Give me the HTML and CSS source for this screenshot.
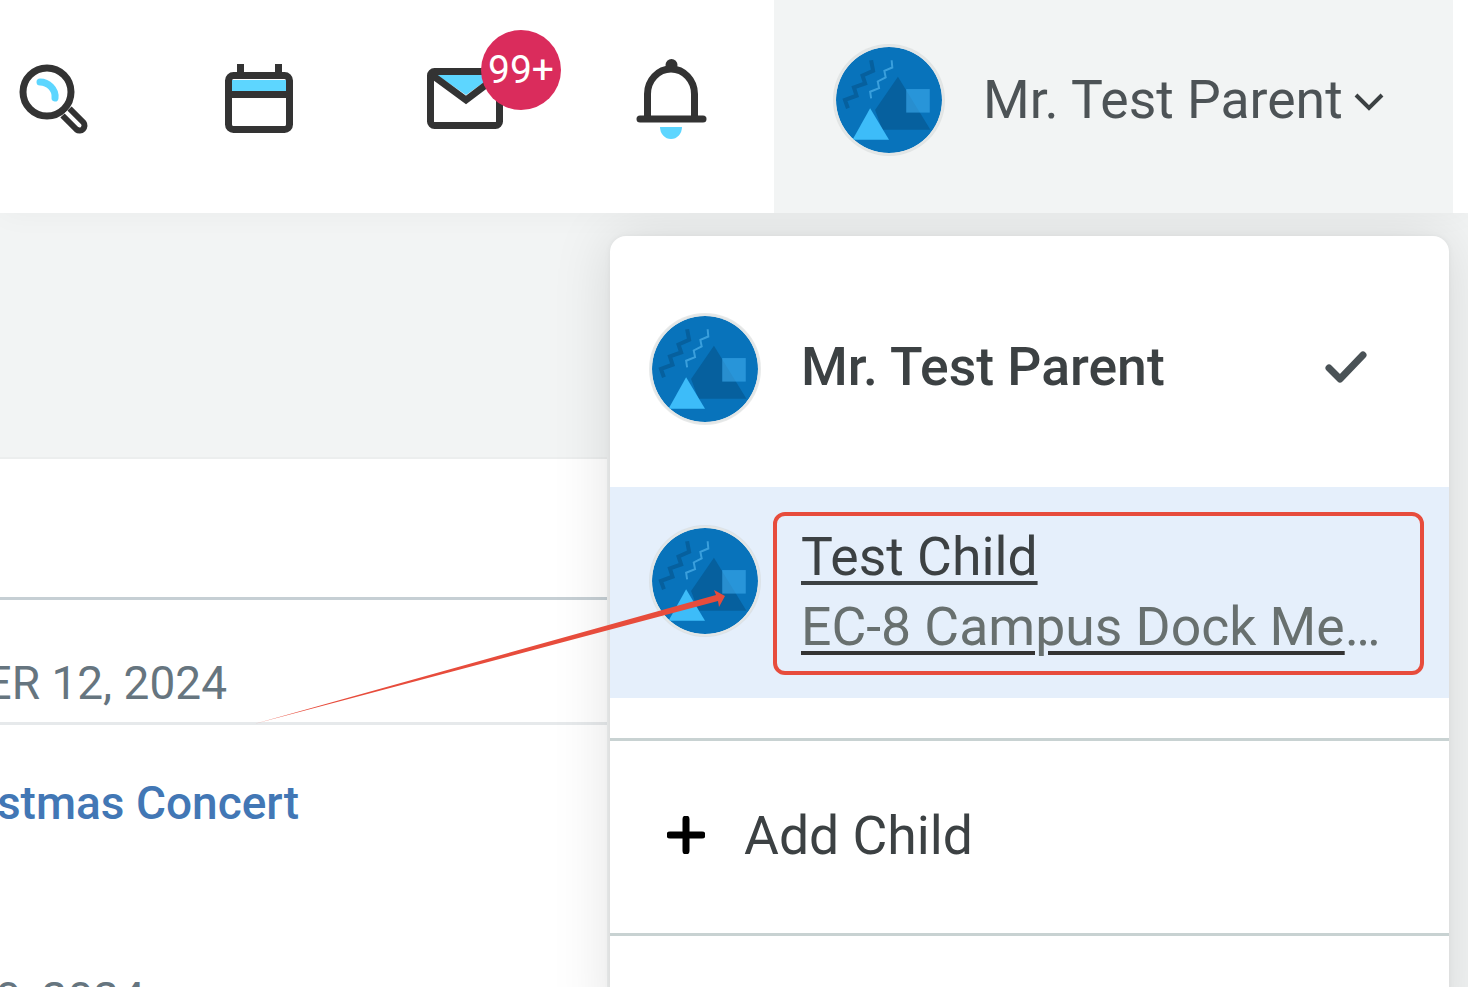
FILE: index.html
```html
<!DOCTYPE html>
<html lang="en">
<head>
<meta charset="utf-8">
<title>Parent account menu</title>
<link rel="stylesheet" href="styles.css">
</head>
<body>
<svg class="defs" width="0" height="0" aria-hidden="true">
  <symbol id="crest" viewBox="0 0 320 320">
    <circle cx="160" cy="160" r="160" fill="#0873bb"/>
    <path d="M187 90 L285 250 L140 250 L118 190Z" fill="#06609e"/>
    <rect x="212" y="127" width="71" height="71" fill="#3ba7ea" opacity=".65"/>
    <path d="M103 185 L160 280 L50 280Z" fill="#3dbcf9"/>
    <path d="M36 185 L27 160 L62 147 L54 122 L88 110 L80 86 L112 72 L106 40" fill="none" stroke="#06609e" stroke-width="12"/>
    <path d="M106 155 L103 135 L130 124 L126 104 L150 92 L146 72 L170 62 L168 40" fill="none" stroke="#3a9fdc" stroke-width="6"/>
  </symbol>
</svg>

<header class="topbar">
  <nav class="tools">
    <svg class="tool" viewBox="0 0 80 90">
      <path d="M27 28 C35 28 43 35 42 44" class="tint-line"/>
      <circle cx="34" cy="38" r="24" class="ink"/>
      <path d="M56.500 54.500 L70.500 68.500 A5 5 0 0 1 63.500 75.500 L49.500 61.500" class="ink-thin"/>
    </svg>
    <svg class="tool" viewBox="0 0 80 90">
      <rect x="13" y="26" width="54" height="11" class="tint"/>
      <rect x="9.500" y="21.500" width="61" height="54" rx="5" class="ink"/>
      <path d="M21.500 10 V20 M59.500 10 V20 M10 40.500 H70" class="ink"/>
    </svg>
    <div class="tool-wrap">
      <svg class="tool" viewBox="0 0 80 90">
        <path d="M9 19 H72 L41 41Z" class="tint"/>
        <rect x="5.500" y="17.500" width="69" height="54" rx="4" class="ink"/>
        <path d="M7 21 L41 46 L74 21" class="ink"/>
      </svg>
      <span class="badge">99+</span>
    </div>
    <svg class="tool" viewBox="0 0 80 90">
      <circle cx="40.500" cy="11" r="6" fill="#333"/>
      <path d="M16.500 64 V40 A23.500 25 0 0 1 63.500 40 V64" class="ink"/>
      <path d="M9 65 H72" class="ink round"/>
      <path d="M29 73 H51 A11 12 0 0 1 29 73Z" class="tint"/>
    </svg>
  </nav>
  <div class="profile">
    <svg class="avatar"><use href="#crest"/></svg>
    <span class="profile-name">Mr. Test Parent</span>
    <svg class="chevron" viewBox="0 0 30 24"><path d="M2 5 L15 18 L28 5"/></svg>
  </div>
</header>

<main class="content">
  <div class="band"></div>
  <section class="card">
    <div class="card-head"></div>
    <div class="date-row"><span>DECEMBER 12, 2024</span></div>
    <div class="event-row"><a class="event-link">Christmas Concert</a></div>
    <div class="date-row next"><span>DECEMBER 20, 2024</span></div>
  </section>
</main>

<aside class="menu">
  <div class="menu-row current">
    <svg class="avatar"><use href="#crest"/></svg>
    <strong class="menu-name">Mr. Test Parent</strong>
    <svg class="check" viewBox="0 0 42 34"><path d="M4 18 L15 29 L38 5"/></svg>
  </div>
  <div class="menu-row child">
    <svg class="avatar"><use href="#crest"/></svg>
    <div class="child-text">
      <div class="child-name">Test Child</div>
      <div class="child-school"><span>EC-8 Campus Dock Memorial School</span></div>
    </div>
  </div>
  <div class="menu-add">
    <svg class="plus" viewBox="0 0 38 38"><path d="M19 3 V35 M3 19 H35"/></svg>
    <span>Add Child</span>
  </div>
</aside>

<div class="callout"></div>
<svg class="arrow" viewBox="0 0 1468 987">
  <path d="M254 724 L716 595 L714 590 L725 596 L719 607 L718 601Z"/>
</svg>
</body>
</html>
```
FILE: styles.css
```css
* { box-sizing: border-box; }
html, body { margin: 0; height: 987px; overflow: hidden; }
body { position: relative; background: #f2f4f4; font-family: Roboto, "Liberation Sans", sans-serif; color: #3c4143; }
.defs { position: absolute; }

.topbar { display: flex; height: 213px; background: #fff; position: relative; z-index: 2; box-shadow: 0 0 30px rgba(0, 0, 0, .04); }
.tools { display: flex; align-items: flex-start; gap: 126px; width: 774px; padding: 54px 0 0 13px; }
.tool { display: block; width: 80px; height: 90px; overflow: visible; }
.tool-wrap { position: relative; width: 80px; height: 90px; }
.ink { fill: none; stroke: #333; stroke-width: 7; }
.ink-thin { fill: #fff; stroke: #333; stroke-width: 6; stroke-linejoin: round; }
.round { stroke-linecap: round; }
.tint { fill: #5dd6ff; }
.tint-line { fill: none; stroke: #5dd6ff; stroke-width: 7; stroke-linecap: round; }
.badge { position: absolute; left: 56px; top: -24px; width: 80px; height: 80px; border-radius: 50%; background: #da2c5c; color: #fff; font-size: 39px; line-height: 80px; text-align: center; }

.profile { display: flex; align-items: center; width: 679px; padding: 0 0 14px 60px; background: #f2f4f4; }
.avatar { display: block; flex: none; width: 110px; height: 110px; padding: 2px; border-radius: 50%; background: #e3e6e6; box-shadow: 0 0 0 1px rgba(210, 214, 214, .5); }
.profile-name { margin-left: 39px; font-size: 53.5px; color: #4d5356; white-space: nowrap; }
.chevron { width: 30px; height: 24px; margin-left: 11px; margin-top: 4px; fill: none; stroke: #3c4143; stroke-width: 4; }

.content { width: 607px; }
.band { height: 244px; }
.card { height: 530px; background: #fff; border-top: 2px solid #eceeee; }
.card-head { height: 141px; border-bottom: 3px solid #c6cfd4; }
.date-row { display: flex; justify-content: flex-end; width: 100%; height: 125px; padding: 56px 380px 0 0; border-bottom: 3px solid #e6e9eb; font-size: 46px; color: #66757f; white-space: nowrap; }
.date-row.next { height: 40px; padding: 22px 462px 0 0; border-bottom: 0; }
.event-row { display: flex; justify-content: flex-end; width: 299px; height: 225px; padding-top: 51px; white-space: nowrap; }
.event-link { font-size: 46px; font-weight: 500; color: #4277b5; }

.menu { position: absolute; left: 610px; top: 236px; width: 839px; height: 800px; background: #fff; border-radius: 16px 16px 0 0; box-shadow: 0 0 60px rgba(0, 0, 0, .12), 0 0 6px rgba(0, 0, 0, .05); }
.menu-row { display: flex; padding-left: 40px; }
.current { height: 251px; padding-top: 78px; }
.menu-name { margin-left: 41px; margin-top: 18px; font-size: 53.5px; font-weight: 500; line-height: 70px; white-space: nowrap; }
.check { width: 42px; height: 34px; margin-left: 160px; margin-top: 36px; fill: none; stroke: #4a5256; stroke-width: 7; stroke-linecap: round; stroke-linejoin: round; }
.child { height: 211px; padding-top: 39px; background: #e5effb; }
.child-text { width: 584px; margin-left: 41px; margin-top: -4px; font-size: 53.5px; line-height: 70px; }
.child-name { text-decoration: underline; text-decoration-thickness: 4px; text-underline-offset: 6px; white-space: nowrap; }
.child-school { overflow: hidden; text-overflow: ellipsis; white-space: nowrap; color: #68706f; }
.child-school span { text-decoration: underline; text-decoration-color: #333; text-decoration-thickness: 4px; text-underline-offset: 6px; }
.menu-add { display: flex; align-items: center; gap: 39px; height: 198px; margin-top: 40px; padding: 0 0 4px 57px; border-top: 3px solid #c8d2d2; border-bottom: 3px solid #c8d2d2; font-size: 53.5px; }
.plus { flex: none; width: 38px; height: 38px; fill: none; stroke: #000; stroke-width: 7; stroke-linecap: round; }

.callout { position: absolute; left: 773px; top: 512px; width: 651px; height: 163px; border: 4px solid #e74c3c; border-radius: 12px; }
.arrow { position: absolute; left: 0; top: 0; width: 1468px; height: 987px; fill: #e74c3c; pointer-events: none; }
```
